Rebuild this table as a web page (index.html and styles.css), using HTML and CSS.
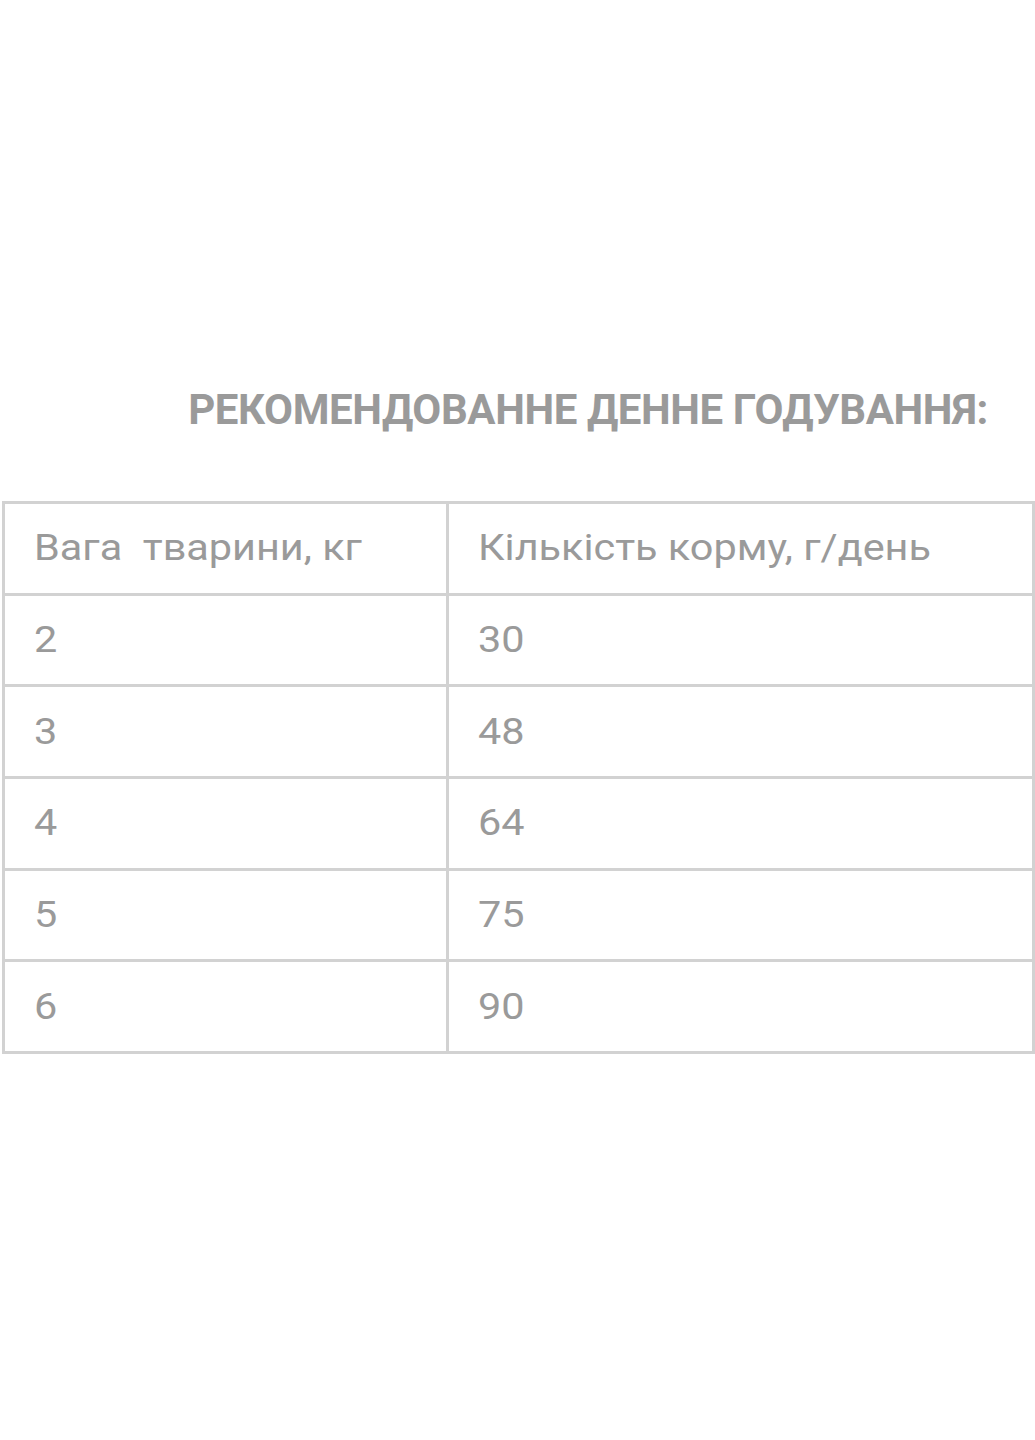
FILE: index.html
```html
<!DOCTYPE html>
<html lang="uk">
<head>
<meta charset="utf-8">
<title>Рекомендоване денне годування</title>
<link rel="stylesheet" href="styles.css">
</head>
<body>
<main class="page">
  <h2 class="title">РЕКОМЕНДОВАННЕ ДЕННЕ ГОДУВАННЯ:</h2>
  <table class="feed">
    <tr><td><span class="cell">Вага&nbsp; тварини, кг</span></td><td><span class="cell">Кількість корму, г/день</span></td></tr>
    <tr><td><span class="cell">2</span></td><td><span class="cell">30</span></td></tr>
    <tr><td><span class="cell">3</span></td><td><span class="cell">48</span></td></tr>
    <tr><td><span class="cell">4</span></td><td><span class="cell">64</span></td></tr>
    <tr><td><span class="cell">5</span></td><td><span class="cell">75</span></td></tr>
    <tr><td><span class="cell">6</span></td><td><span class="cell">90</span></td></tr>
  </table>
</main>
</body>
</html>
```
FILE: styles.css
```css
html, body {
  margin: 0;
  padding: 0;
  background: #ffffff;
}
.page {
  padding-top: 384px;
  font-family: Roboto, "Noto Sans", sans-serif;
  color: #999999;
}
.title {
  margin: 0 47px 0 0;
  text-align: right;
  font-size: 42px;
  font-weight: 700;
  line-height: 52px;
  color: #9a9a9a;
  letter-spacing: -0.4px;
}
.feed {
  margin: 65px 0 0 2px;
  width: 1033px;
  border-collapse: collapse;
  table-layout: fixed;
}
.feed td {
  border: 3px solid #d2d2d2;
  height: 88.7px;
  padding: 0 0 0 29px;
  font-size: 36px;
  font-weight: 400;
  color: #9a9a9a;
  vertical-align: middle;
  white-space: nowrap;
}
.feed td:first-child {
  width: 412px;
}
.cell {
  display: inline-block;
  transform: scaleX(1.15);
  transform-origin: left center;
}
```
